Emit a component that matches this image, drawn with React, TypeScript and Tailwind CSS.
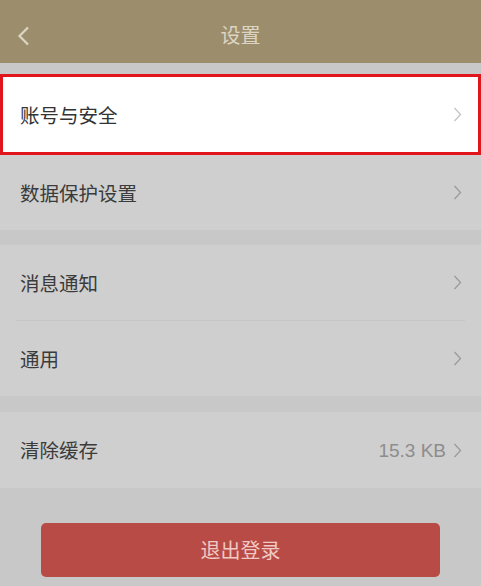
import React from "react";

const font = { fontFamily: '"Noto Sans CJK SC", "Noto Sans", sans-serif' };

function Chevron({ className = "" }: { className?: string }) {
  return (
    <svg width="9" height="15" viewBox="0 0 9 15" className={className}>
      <path d="M1.5 1 L7.5 7.5 L1.5 14" fill="none" stroke="currentColor" strokeWidth="1.3" />
    </svg>
  );
}

function Row({ label, value, cls = "" }: { label: string; value?: string; cls?: string }) {
  return (
    <div className={`flex items-center justify-between pl-5 pr-[19px] ${cls}`}>
      <span className="text-[19.5px] text-[#3b3b3b] leading-none">{label}</span>
      <div className="flex items-center gap-[7px]">
        {value && <span className="text-[19px] text-[#8d8d8d] leading-none" style={{ fontFamily: '"Liberation Sans", Arial, sans-serif' }}>{value}</span>}
        <Chevron className="text-[#9b9b9b]" />
      </div>
    </div>
  );
}

export default function App() {
  return (
    <div className="w-[481px] h-[586px] bg-[#c8c8c8] flex flex-col overflow-hidden" style={font}>
      <div className="h-[63px] bg-[#9c8e6c] relative flex items-center justify-center pt-[7px] shrink-0">
        <svg width="14" height="20" viewBox="0 0 14 20" className="absolute left-[17px] top-[26px] text-[#ddd5c4]">
          <path d="M11 1.5 L2.5 10 L11 18.5" fill="none" stroke="currentColor" strokeWidth="2.2" />
        </svg>
        <span className="text-[20px] text-[#ddd5c4] leading-none">设置</span>
      </div>
      <div className="h-[11px] shrink-0" />
      <div className="h-[81px] shrink-0 bg-white border-[3px] border-[#e0161c] flex items-center justify-between pl-[17px] pr-[16px]">
        <span className="text-[19.5px] text-[#333] leading-none">账号与安全</span>
        <Chevron className="text-[#c4c4c4]" />
      </div>
      <Row label="数据保护设置" cls="h-[75px] bg-[#cfcfcf] shrink-0" />
      <div className="h-[15px] shrink-0" />
      <Row label="消息通知" cls="h-[75px] bg-[#cfcfcf] shrink-0" />
      <div className="h-px bg-[#cfcfcf] shrink-0 pl-4 pr-4">
        <div className="h-px bg-[#c5c5c5]" />
      </div>
      <Row label="通用" cls="h-[75px] bg-[#cfcfcf] shrink-0" />
      <div className="h-[16px] shrink-0" />
      <Row label="清除缓存" value="15.3 KB" cls="h-[76px] bg-[#cfcfcf] shrink-0" />
      <div className="px-[41px] pt-[35px] shrink-0">
        <button className="w-full h-[54px] rounded-[5px] bg-[#b94b46] flex items-center justify-center text-[20px] text-[#f0c9c2] leading-none" style={font}>
          退出登录
        </button>
      </div>
    </div>
  );
}
